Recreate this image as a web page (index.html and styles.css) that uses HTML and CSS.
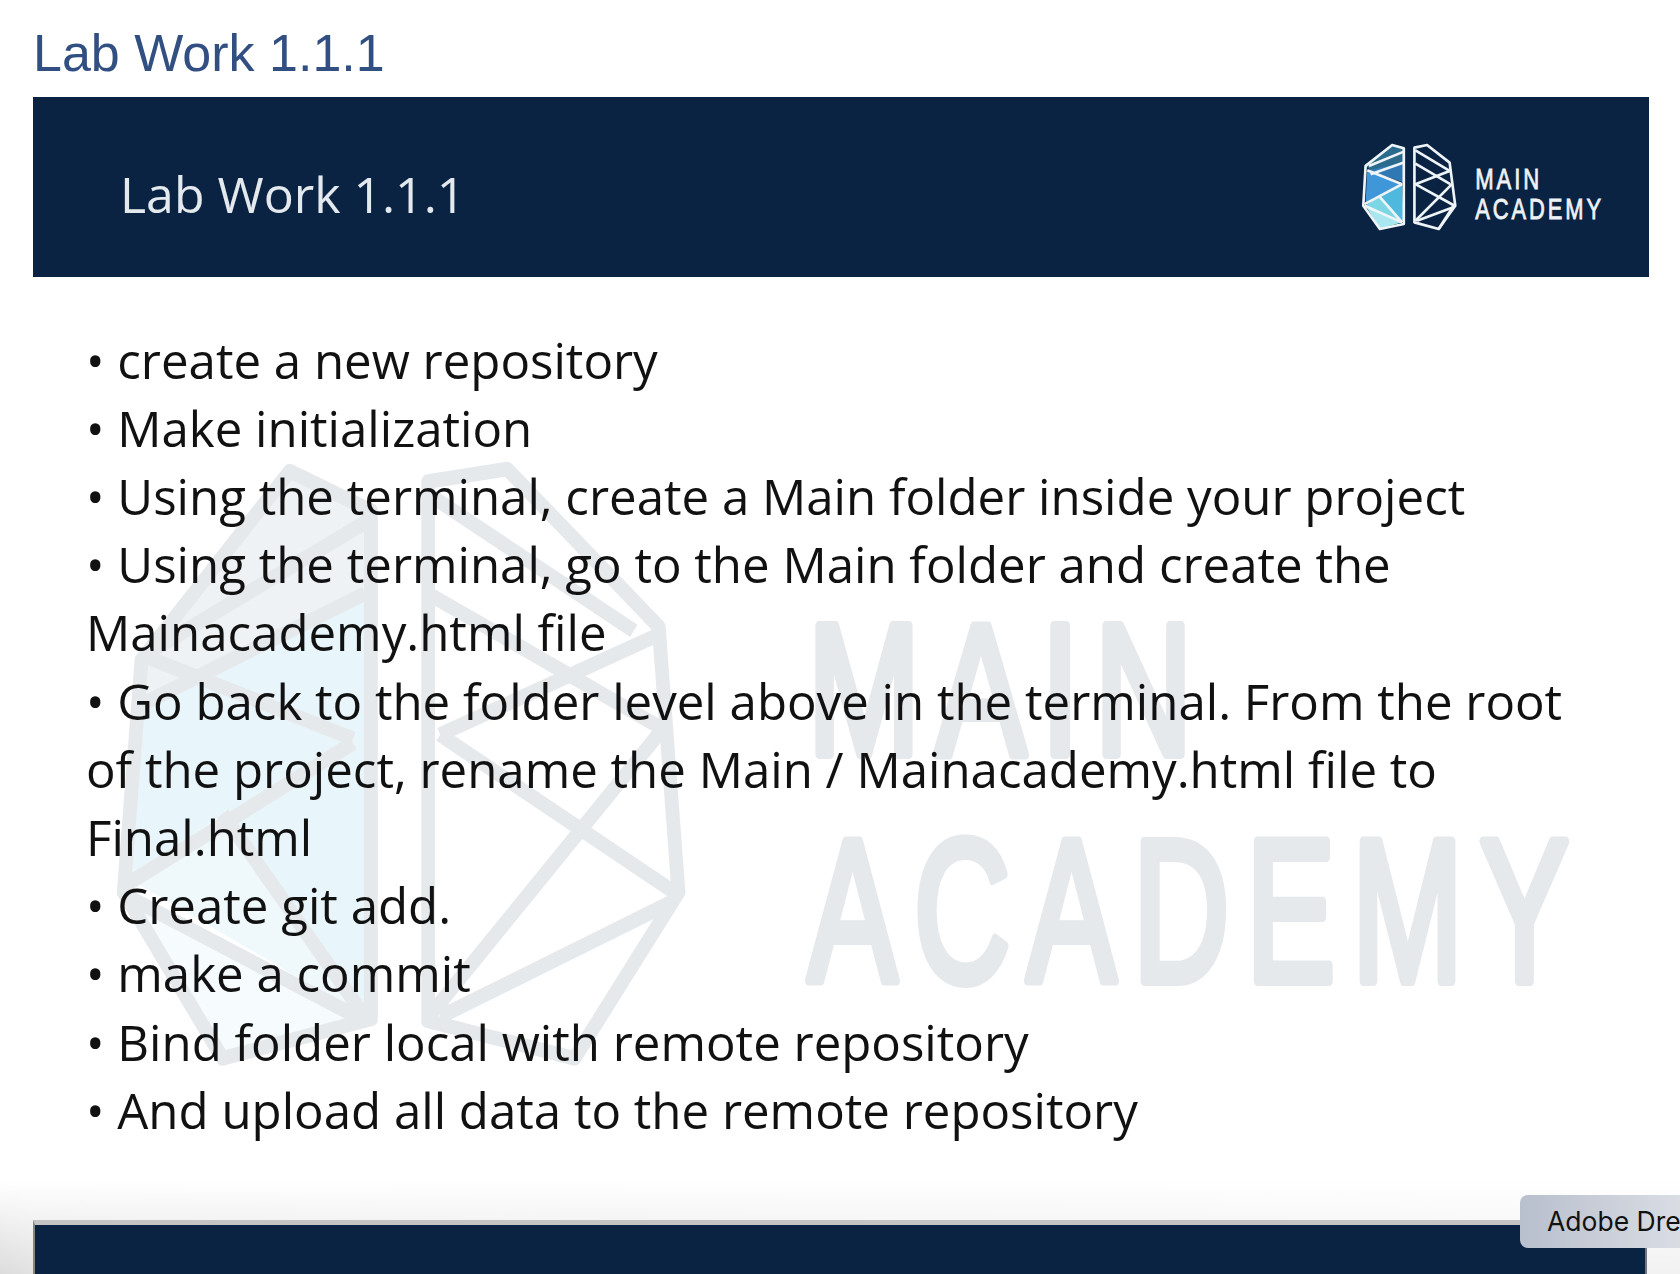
FILE: index.html
```html
<!DOCTYPE html>
<html lang="en">
<head>
<meta charset="utf-8">
<title>Lab Work 1.1.1</title>
<link rel="stylesheet" href="styles.css">
</head>
<body>
<h1 class="page-title">Lab Work 1.1.1</h1>
<header class="banner">
  <div class="banner-title">Lab Work 1.1.1</div>
  <svg class="logo" viewBox="122 66 730 265" aria-label="Main Academy">
    <polygon points="215,72 250,82 250,125 160,155 135,135" fill="#2a6a8c"/>
    <polygon points="250,125 250,185 140,148" fill="#2f78b4"/>
    <polygon points="140,148 245,190 135,245" fill="#3f97da"/>
    <polygon points="190,218 245,190 250,305 135,255" fill="#4fb9dd"/>
    <polygon points="135,255 175,225 245,305" fill="#7dd6e4"/>
    <polygon points="135,255 245,305 178,325" fill="#a8e6f0"/>
    <g class="logo-lines">
      <polygon points="215,72 250,82 250,310 178,325 128,255 135,135"/>
      <polyline points="250,92 145,135"/>
      <polyline points="250,125 150,160"/>
      <polyline points="140,148 245,190"/>
      <polyline points="245,190 132,250"/>
      <polyline points="132,255 245,305"/>
      <polyline points="175,225 245,305"/>
      <polygon points="282,80 320,72 388,125 405,255 355,325 282,305"/>
      <polyline points="285,88 388,150"/>
      <polyline points="388,150 285,190"/>
      <polyline points="285,128 390,190"/>
      <polyline points="285,190 403,255"/>
      <polyline points="395,190 285,300"/>
      <polyline points="403,258 290,300"/>
      <polyline points="355,325 400,255"/>
    </g>
    <text class="logo-text" x="465" y="205" textLength="202" lengthAdjust="spacingAndGlyphs">MAIN</text>
    <text class="logo-text" x="465" y="295" textLength="388" lengthAdjust="spacingAndGlyphs">ACADEMY</text>
  </svg>
</header>
<main class="content">
  <svg class="watermark" viewBox="33 277 1616 900" aria-hidden="true">
    <g transform="translate(100 440) scale(0.3954 0.415)">
      <polygon points="480,75 685,170 685,390 105,640 105,530" fill="#eef2f4"/>
      <polygon points="105,640 685,380 685,1395 310,900 80,1060" fill="#e8f6fb"/>
      <polygon points="80,1060 310,900 670,1390" fill="#eff9fc"/>
      <polygon points="70,1100 670,1400 310,1490" fill="#f6fcfe"/>
      <g class="wm-lines">
        <polygon points="480,75 685,170 685,1395 310,1490 60,1090 105,530"/>
        <polyline points="685,190 110,520"/>
        <polyline points="670,370 100,640"/>
        <polyline points="110,520 640,720"/>
        <polyline points="640,730 70,1070"/>
        <polyline points="70,1100 670,1400"/>
        <polyline points="310,900 670,1390"/>
        <polygon points="830,100 1030,70 1413,450 1463,1090 1200,1490 830,1400"/>
        <polyline points="830,130 1350,460"/>
        <polyline points="830,370 1430,700"/>
        <polyline points="1410,470 860,710"/>
        <polyline points="860,710 1453,1090"/>
        <polyline points="1420,700 840,1380"/>
        <polyline points="1453,1110 860,1390"/>
      </g>
    </g>
    <text class="wm-text" x="808" y="754" textLength="400" lengthAdjust="spacingAndGlyphs">MAIN</text>
    <text class="wm-text wm-text-large" x="808" y="981" textLength="778" lengthAdjust="spacingAndGlyphs">ACADEMY</text>
  </svg>
  <ul class="tasks">
    <li>• create a new repository</li>
    <li>• Make initialization</li>
    <li>• Using the terminal, create a Main folder inside your project</li>
    <li>• Using the terminal, go to the Main folder and create the Mainacademy.html file</li>
    <li>• Go back to the folder level above in the terminal. From the root of the project, rename the Main / Mainacademy.html file to Final.html</li>
    <li>• Create git add.</li>
    <li>• make a commit</li>
    <li>• Bind folder local with remote repository</li>
    <li>• And upload all data to the remote repository</li>
  </ul>
</main>
<footer class="footer-zone">
  <div class="next-banner"></div>
</footer>
<div class="tooltip">Adobe Dreamweaver</div>
</body>
</html>
```
FILE: styles.css
```css
html, body {
  margin: 0;
  padding: 0;
}
body {
  width: 1680px;
  height: 1274px;
  overflow: hidden;
  background: #fff;
  position: relative;
}
.page-title {
  margin: 0 0 17px;
  padding: 26px 0 0 33px;
  font: 400 52px/54px "Liberation Sans", Arial, sans-serif;
  color: #324f82;
}
.banner {
  box-sizing: border-box;
  margin-left: 33px;
  width: 1616px;
  height: 180px;
  background: #0a2342;
  display: flex;
  align-items: center;
  justify-content: space-between;
  padding: 0 45px 0 87px;
}
.banner-title {
  padding-top: 14px;
  font: 400 50px/1 "Open Sans", sans-serif;
  color: #e4e9ee;
}
.logo {
  width: 243px;
  height: 88px;
}
.logo-lines {
  fill: none;
  stroke: #eef4f7;
  stroke-width: 8;
  stroke-linejoin: round;
}
.logo-text {
  font: 400 90px "Liberation Sans", sans-serif;
  letter-spacing: 12px;
  fill: #eef2f5;
  stroke: #eef2f5;
  stroke-width: 2.5;
}
.content {
  position: relative;
  margin-left: 33px;
  width: 1616px;
  height: 893px;
}
.watermark {
  position: absolute;
  left: 0;
  top: 0;
  width: 1616px;
  height: 900px;
}
.wm-lines {
  fill: none;
  stroke: #e6e9ec;
  stroke-width: 35;
  stroke-linejoin: round;
}
.wm-text {
  font: 400 185px "Liberation Sans", sans-serif;
  letter-spacing: 22px;
  fill: #e6e9ec;
  stroke: #e6e9ec;
  stroke-width: 10;
  stroke-linejoin: round;
}
.wm-text-large {
  font-size: 203px;
  letter-spacing: 26px;
}
.tasks {
  position: relative;
  list-style: none;
  margin: 0;
  padding: 48.5px 0 0 53px;
  width: 1530px;
  font: 400 49.2px/68.2px "Open Sans", sans-serif;
  color: #111;
}
.footer-zone {
  position: relative;
  box-sizing: border-box;
  height: 104px;
  padding: 50px 0 0 33px;
  background:
    linear-gradient(to bottom, #fff 10%, rgba(255, 255, 255, 0) 100%),
    linear-gradient(to right, #dcdcdc, #e2e2e2 33px, #f2f2f2);
}
.next-banner {
  box-sizing: border-box;
  width: 1614px;
  height: 54px;
  background: #0a2342;
  border-top: 5px solid #c4c4c4;
  border-left: 2px solid #858585;
  border-right: 2px solid #777;
}
.tooltip {
  position: absolute;
  left: 1520px;
  top: 1195px;
  width: 200px;
  height: 53px;
  box-sizing: border-box;
  padding-left: 27px;
  border-radius: 8px;
  background: linear-gradient(to right, #b8bfcd, #e2e4e9);
  font: 400 26.5px/53px Inter, sans-serif;
  color: #111;
  white-space: nowrap;
  overflow: hidden;
}
```
